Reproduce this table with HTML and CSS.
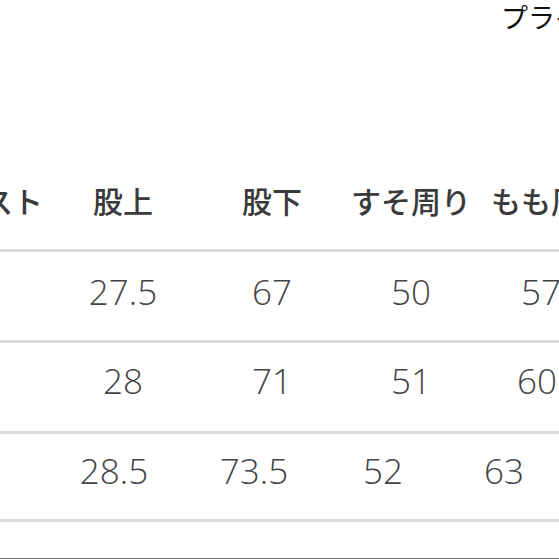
FILE: index.html
```html
<!DOCTYPE html>
<html lang="ja">
<head>
<meta charset="utf-8">
<title>サイズ表</title>
<link rel="stylesheet" href="styles.css">
</head>
<body>
<div class="page">
  <div class="brand">プライス</div>
  <div class="table">
    <div class="hdr cols">
      <div class="c">ウエスト</div>
      <div class="c">股上</div>
      <div class="c">股下</div>
      <div class="c">すそ周り</div>
      <div class="c last h4">もも周り</div>
    </div>
    <div class="row cols r1">
      <div class="c first">76</div>
      <div class="c">27.5</div>
      <div class="c">67</div>
      <div class="c">50</div>
      <div class="c last p1">57.5</div>
    </div>
    <div class="row cols r2">
      <div class="c first">80</div>
      <div class="c">28</div>
      <div class="c">71</div>
      <div class="c">51</div>
      <div class="c last p2">60.5</div>
    </div>
    <div class="row cols3 r3">
      <div class="c first">84</div>
      <div class="c">28.5</div>
      <div class="c">73.5</div>
      <div class="c">52</div>
      <div class="c last p3">63</div>
    </div>
    <div class="foot"></div>
  </div>
</div>
</body>
</html>
```

FILE: styles.css
```css
html, body {
  margin: 0;
  padding: 0;
  background: #fff;
}
body {
  width: 559px;
  height: 559px;
  overflow: hidden;
}
.page {
  width: 559px;
  height: 559px;
  overflow: hidden;
}
.brand {
  padding: 3px 0 0 501px;
  font-family: "Noto Sans CJK JP", sans-serif;
  font-weight: 400;
  font-size: 27px;
  line-height: 27px;
  color: #111;
  white-space: nowrap;
}
.table {
  margin-top: 155px;
  margin-left: -87px;
  width: 760px;
}
.cols {
  display: grid;
  grid-template-columns: 140px 140px 158px 120px 160px;
}
.cols3 {
  display: grid;
  grid-template-columns: 131px 140px 140px 118px 160px;
}
.c {
  text-align: center;
  white-space: nowrap;
}
.c.first {
  padding-right: 4px;
}
.c.last {
  text-align: left;
}
.hdr {
  height: 30px;
  padding-bottom: 34px;
  border-bottom: 3px solid #dcdcdc;
  font-family: "Noto Sans CJK JP", sans-serif;
  font-weight: 500;
  font-size: 30px;
  line-height: 30px;
  color: #3a3a3a;
}
.h4 { padding-left: 20px; }
.row {
  box-sizing: border-box;
  border-bottom: 3px solid #dcdcdc;
  font-family: "Open Sans", sans-serif;
  font-weight: 300;
  font-size: 35px;
  line-height: 36px;
  color: #444;
}
.r1 { height: 91px; padding-top: 22px; }
.r2 { height: 91px; padding-top: 20px; }
.r3 { height: 88px; padding-top: 19px; }
.p1 { padding-left: 50px; }
.p2 { padding-left: 46px; }
.p3 { padding-left: 42px; }
.foot {
  height: 36px;
  border-bottom: 2px solid #777;
}
```
